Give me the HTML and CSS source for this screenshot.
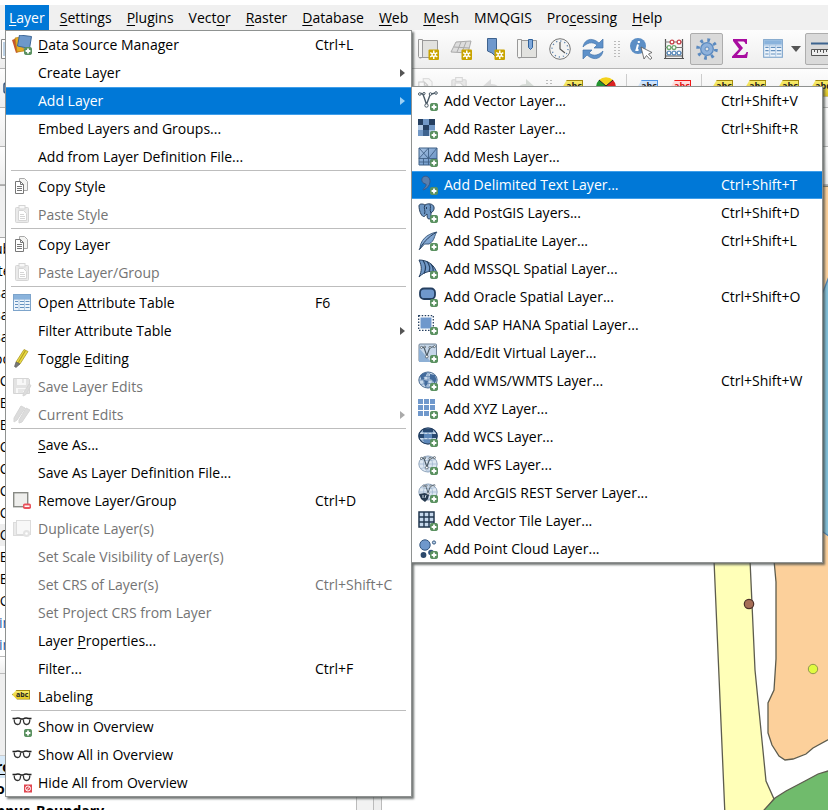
FILE: index.html
```html
<!DOCTYPE html>
<html lang="en">
<head>
<meta charset="utf-8">
<title>QGIS</title>
<meta name="viewport" content="width=device-width">
<link rel="stylesheet" href="styles.css">
</head>
<body>
<svg class="defs" aria-hidden="true">
  <defs>
    <linearGradient id="g-blue" x1="0" y1="0" x2="1" y2="1"><stop offset="0" stop-color="#a9c4e4"/><stop offset="1" stop-color="#5d8bc0"/></linearGradient>
  </defs>
  <symbol id="plus" viewBox="0 0 20 20"><rect x="12.500" y="12.500" width="7" height="7" rx="1.200" fill="#5a9160" stroke="#5a9160"/><path d="M16 13.600v4.800M13.600 16h4.800" stroke="#fff" stroke-width="1.800"/></symbol>
  <symbol id="star" viewBox="0 0 20 20"><rect x="10" y="10" width="10" height="10" rx="1" fill="#c9a400"/><path d="M15 11v8M11.600 13l6.800 4M18.400 13l-6.800 4" stroke="#fff" stroke-width="1.400"/><circle cx="15" cy="15" r="2.200" fill="#fff"/><circle cx="15" cy="15" r="1" fill="#c9a400"/></symbol>
  <symbol id="source" viewBox="0 0 20 20"><path d="M0 5l5-2 4 13-5 2z" fill="#c9552b"/><path d="M3 3l6-1 3 14-7 1z" fill="#e5ac25" stroke="#b57c13" stroke-width=".7"/><path d="M7.500 0l12 1.500-2 12L5.500 11z" fill="#6d98cb" stroke="#3f6898"/><use href="#plus"/></symbol>
  <symbol id="copy" viewBox="0 0 20 20"><path d="M7.500 1.500h5l3 3v9h-8z" fill="#f4f4f2" stroke="#aaa"/><path d="M3.500 4.500h5l3 3v9h-8z" fill="#fff" stroke="#777"/><path d="M8.500 4.500v3h3M5 9.500h5M5 11.500h5M5 13.500h5" fill="none" stroke="#777"/></symbol>
  <symbol id="paste" viewBox="0 0 20 20"><rect x="3.500" y="2.500" width="13" height="15" rx="1" fill="#ccc" stroke="#999"/><rect x="7" y=".5" width="6" height="3.500" fill="#eee" stroke="#999"/><path d="M6.500 5.500h5l3 3v7h-8z" fill="#fff" stroke="#999"/><path d="M8 9.500h4M8 11.500h5M8 13.500h5" stroke="#999"/></symbol>
  <symbol id="table" viewBox="0 0 20 20"><rect x="1.500" y="1.500" width="17" height="16" fill="#edf4fb" stroke="#7da4cb"/><path d="M2 2h16v4H2z" fill="#8ab3dc"/><path d="M2 6.500h16M7 6v11M12.500 6v11" stroke="#9fbfe0" stroke-width=".8"/><path d="M3 8.500h3M8 8.500h4M13.500 8.500h4M3 11.500h3M8 11.500h4M13.500 11.500h4M3 14.500h3M8 14.500h4M13.500 14.500h4" stroke="#6490be"/></symbol>
  <symbol id="pencil" viewBox="0 0 20 20"><path d="M12 .5l4 2L8 15l-4-2z" fill="#eadc45" stroke="#a18b16" stroke-width=".7"/><path d="M13.500 1.500L6 14" stroke="#b59d20" stroke-width="1.200"/><path d="M4 13l4 2-4 3.500-1.500-1z" fill="#777" stroke="#555" stroke-width=".6"/></symbol>
  <symbol id="save" viewBox="0 0 20 20"><path d="M1.500 1.500h15l1 1v14h-16z" fill="#bbb" stroke="#999"/><path d="M5 2h9v6H5zM4 11h11v5H4z" fill="#eee"/><path d="M11 2v4M6 13h7M6 15h5" stroke="#999"/><path d="M17 7l2 1.500-5 9-3 1.500.5-3z" fill="#aaa" stroke="#999"/></symbol>
  <symbol id="pencils" viewBox="0 0 20 20"><path d="M9 1l4 2L5 15l-3 2v-4zM14 3l4 2-8 12-3 1v-3z" fill="#aaa" stroke="#999"/></symbol>
  <symbol id="remove" viewBox="0 0 20 20"><rect x="1.700" y="1.700" width="14" height="14" fill="#eeeeec" stroke="#888a85" stroke-width="1.400"/><rect x="11" y="12.500" width="8" height="5.500" rx="1.800" fill="#e8505a"/><path d="M12.500 15.200h5" stroke="#fff" stroke-width="1.500"/></symbol>
  <symbol id="dup" viewBox="0 0 20 20"><rect x="1.500" y="3.500" width="14" height="13" fill="#ccc" stroke="#aaa"/><rect x="4.500" y="1.500" width="14" height="14" fill="#eee" stroke="#aaa"/><circle cx="14.500" cy="14.500" r="3.500" fill="#bbb"/><circle cx="14.500" cy="14.500" r="1.300" fill="#fff"/></symbol>
  <symbol id="glasses" viewBox="0 0 20 10"><path d="M.5 1.500h3c2-1 4-.5 5.500.5h2c1.500-1 3.500-1.500 5.500-.5h3" fill="none" stroke="#222" stroke-width="1.400"/><path d="M2.200 2.500c0 3 1 5 3.400 5s3-2.500 3-5M11.400 2.500c0 3 .8 5 3.200 5s3.200-2 3.200-5" fill="none" stroke="#333" stroke-width="1.300"/></symbol>
  <symbol id="show" viewBox="0 0 20 20"><use href="#glasses" width="20" height="10"/><use href="#plus"/></symbol>
  <symbol id="showall" viewBox="0 0 20 20"><use href="#glasses" y="5" width="20" height="10"/></symbol>
  <symbol id="hide" viewBox="0 0 20 20"><use href="#glasses" width="20" height="10"/><rect x="12" y="11.500" width="8" height="8" fill="#e0454f"/><circle cx="16" cy="15.500" r="2.500" fill="none" stroke="#fff"/><path d="M14.500 17l3-3" stroke="#fff"/></symbol>
  <symbol id="vector" viewBox="0 0 20 20"><path d="M2 3c2.500-1.500 3.500 1 4 3l2.500 7.500L12 4c1.500-2 3.500-1 6-2" fill="none" stroke="#4b5a66" stroke-width="1.400"/><g fill="#fff" stroke="#4b5a66"><circle cx="1.800" cy="3" r="1.300"/><circle cx="8.500" cy="14.500" r="1.700"/><circle cx="12.500" cy="3" r="1.300"/><circle cx="18" cy="2" r="1.300"/><circle cx="6" cy="2.500" r="1.100"/></g></symbol>
  <symbol id="v-add" viewBox="0 0 20 20"><use href="#vector"/><use href="#plus"/></symbol>
  <symbol id="raster" viewBox="0 0 20 20"><path d="M0 0h17v17H0z" fill="#7298c6"/><path d="M0 0h5v6H0zM11 0h6v6h-6zM5 6h6v5H5z" fill="#253f60"/><path d="M0 6h5v5H0zM11 11h6v6h-6z" fill="#b0c8e4"/><path d="M5 11h6v6H5z" fill="#3e638f"/><use href="#plus"/></symbol>
  <symbol id="mesh" viewBox="0 0 20 20"><path d="M1 1h18v17H1z" fill="url(#g-blue)" stroke="#3f6086"/><path d="M1 11.500h18M10.500 1v17M1 1l9.500 10.500M10.500 1L1 11.500M19 1l-8.500 10.500M5.500 11.500V18M1 15h12M15 11.500V18" stroke="#3f6086" stroke-width=".9"/><use href="#plus"/></symbol>
  <symbol id="comma" viewBox="0 0 20 20"><path d="M5 2c3-2 7.500 0 7 5-.5 4-2.500 6-6.500 8-.8-.5.500-1.500 2-3.500 1-1.500.8-2.500-.5-2.800C3.500 8 3 4 5 2z" fill="#5b7fac" stroke="#37598a"/><use href="#plus"/></symbol>
  <symbol id="elephant" viewBox="0 0 20 20"><path d="M1 3c0-3 5-2 6-1 3-2 8-1.500 9 2 .7 3-1.500 5-3 6 0 4 0 6-2 6s-2-3-2-5c-2 1-2 3-3.500 2.500C3 13 1 7 1 3z" fill="#6e97c4" stroke="#273f5d"/><path d="M7 2C5 5 8 8 6.500 11M12 1.500c1.500 3-1 5 1 8.500M8.500 4v2" fill="none" stroke="#273f5d"/><use href="#plus"/></symbol>
  <symbol id="feather" viewBox="0 0 20 20"><path d="M2 18C2 10 8 3 19 1c-3 3-2 9-8 12H6.500z" fill="url(#g-blue)" stroke="#3e5d80"/><path d="M1 19C5 12 10 6 18 1.500" fill="none" stroke="#263f5e"/><use href="#plus"/></symbol>
  <symbol id="sail" viewBox="0 0 20 20"><path d="M1 1c8 0 15 4 18 13-5-3-12-2-18 4 3-6 3-11 0-17z" fill="#7299c7" stroke="#253f60"/><path d="M5 1.500c3 4 3 9 1 13M9 2.500c3 4 3.500 7 2 10M13 5c2 3 2.500 5 2 7" fill="none" stroke="#253f60" stroke-width="1.200"/><use href="#plus"/></symbol>
  <symbol id="oracle" viewBox="0 0 20 20"><rect x="2" y="1.500" width="15" height="10.500" rx="4" fill="#6f98cc" stroke="#253f60" stroke-width="1.800"/><use href="#plus"/></symbol>
  <symbol id="hana" viewBox="0 0 20 20"><path d="M2.500 2.500h11v11h-11z" fill="#6f98cc"/><path d="M.7.700h14.600v14.600H.7z" fill="none" stroke="#253f60" stroke-width="1.300" stroke-dasharray="1.500 1.500"/><use href="#plus"/></symbol>
  <symbol id="virtual" viewBox="0 0 20 20"><rect x="1" y="1" width="17.500" height="17.500" rx="1" fill="#c5d6e8" stroke="#708396"/><path d="M1 19V5l12 14z" fill="#8eb0d5"/><use href="#vector" x="2" y="2" width="16" height="16"/><use href="#plus"/></symbol>
  <symbol id="globe" viewBox="0 0 20 20"><ellipse cx="10" cy="9" rx="9.200" ry="8" fill="#c8d9eb" stroke="#4d6d91"/><path d="M1 9h18M3 4.500c4 1.500 10 1.500 14 0M3 13.500c4-1.500 10-1.500 14 0M10 1v16M10 1C4 5 4 13 10 17M10 1c6 4 6 12 0 16" fill="none" stroke="#6489b1" stroke-width=".8"/></symbol>
  <symbol id="wms" viewBox="0 0 20 20"><use href="#globe"/><path d="M2 5c2-3 5-3.500 7-3L8 5 5.500 6l1 2-3 1zM6 9l4 1-1 4-2 2zM12 3l5 1 1.500 5-2 4-2-4-3-1z" fill="#426b9c"/><use href="#plus"/></symbol>
  <symbol id="xyz" viewBox="0 0 20 20"><path d="M0 0h5v5H0zM6 0h5v5H6zM12 0h5v5h-5zM0 6h5v5H0zM6 6h5v5H6zM12 6h5v5h-5zM0 12h5v5H0zM6 12h5v5H6z" fill="#6f98cc"/><use href="#plus"/></symbol>
  <symbol id="wcs" viewBox="0 0 20 20"><use href="#globe"/><path d="M5 2h10v3H5zM1 7h5v4H1zM14 7h5v4h-5z" fill="#294a72"/><path d="M6 7h8v4H6zM5 13h9v3H6z" fill="#5d88ba"/><ellipse cx="10" cy="9" rx="9.200" ry="8" fill="none" stroke="#253f60" stroke-width="1.200"/><use href="#plus"/></symbol>
  <symbol id="wfs" viewBox="0 0 20 20"><g opacity=".6"><use href="#globe"/></g><use href="#vector" x="2" y="1" width="16" height="16"/><use href="#plus"/></symbol>
  <symbol id="arc" viewBox="0 0 20 20"><g opacity=".6"><use href="#globe"/></g><path d="M1 11l6-1 4 2-1 4-3 3-4-3z" fill="#273b50"/><path d="M5 12v3M8 12l-1 3" stroke="#cfdbe7"/><use href="#vector" x="4" y="1" width="14" height="13"/><use href="#plus"/></symbol>
  <symbol id="vtile" viewBox="0 0 20 20"><path d="M1 1h15v15H1z" fill="#c6d8ec" stroke="#22374f" stroke-width="1.500"/><path d="M6 1v15M11 1v15M1 6h15M1 11h15" stroke="#22374f" stroke-width="1.400"/><use href="#plus"/></symbol>
  <symbol id="cloud" viewBox="0 0 20 20"><circle cx="7" cy="6" r="5.200" fill="#6f98cc" stroke="#34567f"/><circle cx="16" cy="3.500" r="1.600" fill="#b9d1ea" stroke="#34567f"/><circle cx="5.500" cy="16" r="2.900" fill="#2b486b"/><circle cx="13" cy="13.500" r="2.800" fill="#34567f"/><use href="#plus"/></symbol>
  <symbol id="scroll" viewBox="0 0 22 22"><path d="M5.500 2.500h15v17h-15z" fill="#e2e2df" stroke="#999"/><path d="M1.500 1.500h4v17c-1 2-3.500 2-4 0z" fill="#f5f5f3" stroke="#999"/><path d="M2 19.500h16" stroke="#999"/></symbol>
</svg>

<div class="window">
  <nav class="menubar" aria-label="Main menu">
    <div class="entry">
      <button class="top open"><u>L</u>ayer</button>
      <ul class="menu menu-main">
        <li><button class="item"><svg class="ico"><use href="#source"/></svg><span><u>D</u>ata Source Manager</span><kbd>Ctrl+L</kbd></button></li>
        <li><button class="item sub"><i></i><span>Create Layer</span></button></li>
        <li class="parent"><button class="item sub on"><i></i><span>Add Layer</span></button>
          <ul class="menu menu-sub">
            <li><button class="item"><svg class="ico"><use href="#v-add"/></svg><span>Add Vector Layer...</span><kbd>Ctrl+Shift+V</kbd></button></li>
            <li><button class="item"><svg class="ico"><use href="#raster"/></svg><span>Add Raster Layer...</span><kbd>Ctrl+Shift+R</kbd></button></li>
            <li><button class="item"><svg class="ico"><use href="#mesh"/></svg><span>Add Mesh Layer...</span></button></li>
            <li><button class="item on"><svg class="ico"><use href="#comma"/></svg><span>Add Delimited Text Layer...</span><kbd>Ctrl+Shift+T</kbd></button></li>
            <li><button class="item"><svg class="ico"><use href="#elephant"/></svg><span>Add PostGIS Layers...</span><kbd>Ctrl+Shift+D</kbd></button></li>
            <li><button class="item"><svg class="ico"><use href="#feather"/></svg><span>Add SpatiaLite Layer...</span><kbd>Ctrl+Shift+L</kbd></button></li>
            <li><button class="item"><svg class="ico"><use href="#sail"/></svg><span>Add MSSQL Spatial Layer...</span></button></li>
            <li><button class="item"><svg class="ico"><use href="#oracle"/></svg><span>Add Oracle Spatial Layer...</span><kbd>Ctrl+Shift+O</kbd></button></li>
            <li><button class="item"><svg class="ico"><use href="#hana"/></svg><span>Add SAP HANA Spatial Layer...</span></button></li>
            <li><button class="item"><svg class="ico"><use href="#virtual"/></svg><span>Add/Edit Virtual Layer...</span></button></li>
            <li><button class="item"><svg class="ico"><use href="#wms"/></svg><span>Add WMS/WMTS Layer...</span><kbd>Ctrl+Shift+W</kbd></button></li>
            <li><button class="item"><svg class="ico"><use href="#xyz"/></svg><span>Add XYZ Layer...</span></button></li>
            <li><button class="item"><svg class="ico"><use href="#wcs"/></svg><span>Add WCS Layer...</span></button></li>
            <li><button class="item"><svg class="ico"><use href="#wfs"/></svg><span>Add WFS Layer...</span></button></li>
            <li><button class="item"><svg class="ico"><use href="#arc"/></svg><span>Add Ar<u>c</u>GIS REST Server Layer...</span></button></li>
            <li><button class="item"><svg class="ico"><use href="#vtile"/></svg><span>Add Vector Tile Layer...</span></button></li>
            <li><button class="item"><svg class="ico"><use href="#cloud"/></svg><span>Add Point Cloud Layer...</span></button></li>
          </ul>
        </li>
        <li><button class="item"><i></i><span>Embed Layers and Groups...</span></button></li>
        <li><button class="item"><i></i><span>Add from Layer Definition File...</span></button></li>
        <li class="sep" role="separator"></li>
        <li><button class="item"><svg class="ico"><use href="#copy"/></svg><span>Copy Style</span></button></li>
        <li><button class="item" disabled><svg class="ico"><use href="#paste"/></svg><span>Paste Style</span></button></li>
        <li class="sep" role="separator"></li>
        <li><button class="item"><svg class="ico"><use href="#copy"/></svg><span>Copy Layer</span></button></li>
        <li><button class="item" disabled><svg class="ico"><use href="#paste"/></svg><span>Paste Layer/Group</span></button></li>
        <li class="sep" role="separator"></li>
        <li><button class="item"><svg class="ico"><use href="#table"/></svg><span>Open <u>A</u>ttribute Table</span><kbd>F6</kbd></button></li>
        <li><button class="item sub"><i></i><span>Filter Attribute Table</span></button></li>
        <li><button class="item"><svg class="ico"><use href="#pencil"/></svg><span>Toggle <u>E</u>diting</span></button></li>
        <li><button class="item" disabled><svg class="ico"><use href="#save"/></svg><span>Save Layer Edits</span></button></li>
        <li><button class="item sub" disabled><svg class="ico"><use href="#pencils"/></svg><span>Current Edits</span></button></li>
        <li class="sep" role="separator"></li>
        <li><button class="item"><i></i><span><u>S</u>ave As...</span></button></li>
        <li><button class="item"><i></i><span>Save As Layer Definition File...</span></button></li>
        <li><button class="item"><svg class="ico"><use href="#remove"/></svg><span>Remove Layer/Group</span><kbd>Ctrl+D</kbd></button></li>
        <li><button class="item" disabled><svg class="ico"><use href="#dup"/></svg><span>Duplicate Layer(s)</span></button></li>
        <li><button class="item" disabled><i></i><span>Set Scale Visibility of Layer(s)</span></button></li>
        <li><button class="item" disabled><i></i><span>Set CRS of Layer(s)</span><kbd>Ctrl+Shift+C</kbd></button></li>
        <li><button class="item" disabled><i></i><span>Set Project CRS from Layer</span></button></li>
        <li><button class="item"><i></i><span>Layer <u>P</u>roperties...</span></button></li>
        <li><button class="item"><i></i><span>Filter...</span><kbd>Ctrl+F</kbd></button></li>
        <li><button class="item"><span class="tag small">abc</span><span>Labeling</span></button></li>
        <li class="sep" role="separator"></li>
        <li><button class="item"><svg class="ico"><use href="#show"/></svg><span>Show in Overview</span></button></li>
        <li><button class="item"><svg class="ico"><use href="#showall"/></svg><span>Show All in Overview</span></button></li>
        <li><button class="item"><svg class="ico"><use href="#hide"/></svg><span>Hide All from Overview</span></button></li>
      </ul>
    </div>
    <button class="top"><u>S</u>ettings</button>
    <button class="top"><u>P</u>lugins</button>
    <button class="top">Vect<u>o</u>r</button>
    <button class="top"><u>R</u>aster</button>
    <button class="top"><u>D</u>atabase</button>
    <button class="top"><u>W</u>eb</button>
    <button class="top"><u>M</u>esh</button>
    <button class="top">MMQGIS</button>
    <button class="top">Pro<u>c</u>essing</button>
    <button class="top"><u>H</u>elp</button>
  </nav>

  <div class="toolbar" role="toolbar" aria-label="Project">
    <button class="tool lead" aria-label="New"><svg viewBox="0 0 22 22"><path d="M1.500 1.500h19v19h-19z" fill="#fff" stroke="#888"/><path d="M4 4v14" stroke="#7da4cb"/></svg></button>
    <button class="tool" aria-label="New layout"><svg viewBox="0 0 22 22"><use href="#scroll"/><use href="#star" x="1" y="1" width="21" height="21"/></svg></button>
    <button class="tool" aria-label="New mesh"><svg viewBox="0 0 22 22"><path d="M6 4l15-1-3 12L1 14z" fill="#ddd" stroke="#aaa"/><path d="M4 9l15 1M11 4L7 14M16 4l-4 10" stroke="#aaa"/><use href="#star" x="1" y="1" width="21" height="21"/></svg></button>
    <button class="tool" aria-label="New bookmark"><svg viewBox="0 0 22 22"><path d="M4.500.5h9v19L9 15l-4.500-2z" fill="#6f98cc" stroke="#3e628e"/><use href="#star" x="1" y="1" width="21" height="21"/></svg></button>
    <button class="tool" aria-label="Show bookmarks"><svg viewBox="0 0 22 22"><use href="#scroll"/><path d="M12.500 1.500h4v8l-2 2-2-2z" fill="#7fa8da" stroke="#31629b"/></svg></button>
    <button class="tool" aria-label="Temporal controller"><svg viewBox="0 0 22 22"><circle cx="11" cy="11" r="10.300" fill="#f4f4f3" stroke="#777"/><circle cx="11" cy="11" r="8" fill="none" stroke="#5c83ae" stroke-width="1.300" stroke-dasharray="1.200 2.990"/><path d="M11 4v7l5 4" fill="none" stroke="#555" stroke-width="1.200"/></svg></button>
    <button class="tool" aria-label="Refresh"><svg viewBox="0 0 22 22"><path d="M1 9c1-6 6-9 11-7 2 .5 3.500 2 5 3l4-4v9h-9l3-3C10 3 5 5 1 9zM21 13c-1 6-6 9-11 7-2-.5-3.500-2-5-3l-4 4v-9h9l-3 3c5 4 10 2 14-2z" fill="#5e91ca" stroke="#4474aa" stroke-width=".7"/></svg></button>
    <span class="grip"></span>
    <button class="tool" aria-label="Identify"><svg viewBox="0 0 22 22"><circle cx="8" cy="8" r="8" fill="#5c8ec5"/><path d="M8.800 3v2M8 6.500L6.500 12h2" stroke="#fff" stroke-width="2" fill="none"/><path d="M11 9l3 12 2.500-3.500 3.500 4 2-1.500-3.500-4 3.500-1.500z" fill="#fff" stroke="#555" stroke-width=".8"/></svg></button>
    <button class="tool" aria-label="Field calculator"><svg viewBox="0 0 22 22"><path d="M2.500 1v19M19.500 1v19M1 20.500h20M2 18h18" stroke="#555" stroke-width="1.200"/><path d="M2 4h18M2 9.500h18M2 15h18" stroke="#777"/><g fill="#fff" stroke-width="1.300"><g stroke="#c8434b"><circle cx="9" cy="4" r="1.900"/><circle cx="16" cy="4" r="1.900"/></g><g stroke="#6ca86f"><circle cx="6" cy="9.500" r="1.900"/><circle cx="11" cy="9.500" r="1.900"/></g><g stroke="#5e8dbd"><circle cx="6" cy="15" r="1.900"/><circle cx="11" cy="15" r="1.900"/><circle cx="16" cy="15" r="1.900"/></g></g></svg></button>
    <button class="tool pressed" aria-label="Toolbox"><svg viewBox="0 0 22 22"><circle cx="11" cy="11" r="9" fill="none" stroke="#5b8ac0" stroke-width="3.600" stroke-dasharray="2.700 4.370"/><circle cx="11" cy="11" r="6.300" fill="#8eb1db" stroke="#5b8ac0" stroke-width="1.300"/><circle cx="11" cy="11" r="2" fill="#e3e3e3" stroke="#5b8ac0"/></svg></button>
    <button class="tool" aria-label="Statistics"><svg viewBox="0 0 22 22"><path d="M4 1h14v5h-1.500c-.5-2-1.500-2.500-3-2.500H8.500L14 10l-6 7h6c2 0 3-1 3.500-3H19l-1 6H3v-1.500L10 11 4 3z" fill="#a80ca0"/></svg></button>
    <button class="tool" aria-label="Attribute table"><svg viewBox="0 0 20 20"><use href="#table"/></svg></button>
    <span class="drop"></span>
    <button class="tool pressed" aria-label="Measure"><svg viewBox="0 0 22 22"><path d="M0 5.500h22" stroke="#3d648f" stroke-width="2"/><path d="M.5 11.500h21v6H.5z" fill="#eee" stroke="#555"/><path d="M3.500 11v3M6.500 11v4M9.500 11v3M12.500 11v4M15.500 11v3M18.500 11v4" stroke="#555"/></svg></button>
  </div>

  <div class="toolbar second" role="toolbar" aria-label="Labels">
    <button class="tool lead" aria-label="Digitize"><svg viewBox="0 0 22 22"><rect x="4" y="6" width="9" height="10" rx="2" fill="#dce7f3" stroke="#34567f" stroke-width="1.500"/></svg></button>
    <button class="tool faint" aria-label="Copy features"><svg viewBox="0 0 20 20"><use href="#copy"/></svg></button>
    <button class="tool faint" aria-label="Paste features"><svg viewBox="0 0 20 20"><use href="#paste"/></svg></button>
    <button class="tool faint" aria-label="Undo"><svg viewBox="0 0 22 22"><path d="M1 10l9-8v5c6 0 9 3 10 9-3-4-6-4-10-4v5z" fill="#aaa"/></svg></button>
    <button class="tool faint" aria-label="Redo"><svg viewBox="0 0 22 22"><path d="M21 10l-9-8v5c-6 0-9 3-10 9 3-4 6-4 10-4v5z" fill="#9aa89a"/></svg></button>
    <span class="grip"></span>
    <button class="tool"><span class="tag">abc</span></button>
    <button class="tool" aria-label="Diagrams"><svg viewBox="0 0 22 22"><path d="M11 9L4 3a10 10 0 0 1 14 0z" fill="#f4d21c"/><path d="M11 9l7-6a10 10 0 0 1-7 17z" fill="#d92020"/><path d="M11 9v11A10 10 0 0 1 4 3z" fill="#239530"/><path d="M11 9L4 3M11 9l7-6" stroke="#222"/></svg></button>
    <span class="rule"></span>
    <button class="tool"><span class="tag blue">abc</span></button>
    <button class="tool"><span class="tag red">abc</span></button>
    <span class="rule"></span>
    <button class="tool"><span class="tag">abc</span></button>
    <button class="tool"><span class="tag">abc</span></button>
    <button class="tool"><span class="tag">abc</span></button>
    <button class="tool"><span class="tag">abc</span></button>
  </div>
  <div class="toolbar"></div>
  <div class="toolbar last"></div>

  <main class="work">
    <aside class="dock">
      <div class="panel-head"></div>
      <ul class="tree">
        <li>ub</li><li>&nbsp;te</li><li>sa</li><li>sa</li><li>sa</li><li>oo</li>
        <li>rC</li><li>rB</li><li>rB</li><li>rC</li><li>rC</li><li>rC</li><li>rC</li><li class="hover">rC</li><li>rE</li><li>rE</li><li>rG</li>
        <li class="link">tin</li><li class="link">tin</li>
      </ul>
      <div class="layer-head"></div>
      <div class="layer-tools"></div>
      <ul class="layers"><li class="chosen"><u>ro</u></li><li>oe</li><li>npus_Boundary</li></ul>
    </aside>
    <svg class="map" viewBox="382 186 446 624" preserveAspectRatio="xMinYMin slice" role="img" aria-label="Map canvas">
      <g stroke="#5d5c4e" stroke-width="1.300">
        <path d="M706 186L714 560l11 256h36l13-17-8-18-11-111-5-110-2-374z" fill="#ffffb8"/>
        <path d="M764 186l10 374 2 22v77l-2 31-6 13v30l4 12 7 11 6 4 8-1 13-5 7-6 18-10V186z" fill="#fcd09b"/>
        <path d="M755 820l20-22 11-7 19-10 13-7 10-3h8v49z" fill="#70bb6c"/>
        <path d="M816 310l14-36v263l-14-10z" fill="#83bfd8" stroke="#4f84b5"/>
      </g>
      <circle cx="749" cy="604" r="4.700" fill="#a66e57" stroke="#4d302a" stroke-width="1.200"/>
      <circle cx="813" cy="669" r="4.700" fill="#e0fb40" stroke="#909849"/>
    </svg>
  </main>
</div>
</body>
</html>
```
FILE: styles.css
```css
* { box-sizing: border-box; }
body {
  margin: 0;
  background: #fff;
  color: #000;
  font: 14px/20px "Open Sans", "Noto Sans", sans-serif;
  overflow: hidden;
}
button { font: inherit; color: inherit; background: none; border: 0; padding: 0; margin: 0; text-align: left; }
ul { list-style: none; margin: 0; padding: 0; }
u { text-decoration: underline; text-underline-offset: 2px; }
.defs { position: absolute; width: 0; height: 0; }

.window { display: flex; flex-direction: column; height: 100vh; padding-top: 5px; }

.menubar { display: flex; gap: 7px; height: 25px; padding-left: 5px; background: #f0f0f0; flex: none; }
.entry { position: relative; }
.top { height: 25px; padding: 0 4px; white-space: nowrap; }
.top.open { background: #0078d7; color: #fff; }

.menu {
  position: absolute;
  z-index: 2;
  background: #fff;
  border: 1px solid #8f9291;
  box-shadow: 2px 2px 2px rgba(70, 75, 73, .75);
  white-space: nowrap;
}
.menu-main { top: 25px; left: 0; }
.menu-sub { top: -1px; left: 100%; }
.menu > li:last-child { margin-bottom: -1px; }
.parent { position: relative; }
.item {
  display: grid;
  grid-template-columns: 32px 277px 96px;
  align-items: center;
  position: relative;
  width: 100%;
  height: 28px;
}
.menu-sub .item { grid-template-columns: 32px 277px 101px; }
.item kbd { font: inherit; }
.item.on { background: #0078d7; color: #fff; box-shadow: inset 0 1px #3f9eea, inset 0 -1px #3f9eea; }
.item:disabled { color: #747474; }
.item:disabled .ico { opacity: .4; }
.ico { width: 20px; height: 20px; margin-left: 6px; }
.sub::after {
  content: "";
  justify-self: end;
  margin-right: 6px;
  border: 4px solid transparent;
  border-left: 5px solid #555;
  border-right: 0;
}
.sub.on::after { border-left-color: #9bd0f5; }
.sub:disabled::after { border-left-color: #aaa; }
.sep { height: 3px; margin: -1px 5px 0; border-top: 1px solid #bdbdbd; }

.toolbar {
  display: flex;
  align-items: center;
  flex: none;
  height: 39px;
  overflow: hidden;
  background: linear-gradient(#fdfdfd, #ededed);
  border-bottom: 1px solid #b5b5b5;
}
.toolbar.last { height: 38px; }
.tool { display: flex; align-items: center; justify-content: center; flex: none; width: 33px; height: 32px; }
.tool svg { width: 22px; height: 22px; }
.tool.lead { width: 411px; justify-content: flex-start; }
.second .lead { width: 409px; }
.tool.faint { opacity: .35; }
.pressed { background: #dadada; border: 1px solid #adadad; border-radius: 2px; }
.grip {
  flex: none;
  width: 7px;
  height: 18px;
  margin: 0 4px;
  background: radial-gradient(circle, #bbb 1px, transparent 1px) 0 0 / 4px 3px;
}
.drop { flex: none; margin: 0 4px 0 2px; border: 5px solid transparent; border-top: 6px solid #555; border-bottom: 0; }
.rule { flex: none; width: 1px; height: 28px; margin: 0 4px; background: #ccc; }
.tag {
  width: 21px;
  height: 17px;
  padding-left: 3px;
  background: linear-gradient(#f8ec6c, #dfc41e);
  clip-path: polygon(5px 0, 100% 0, 100% 100%, 5px 100%, 0 50%);
  border: 1px solid #a38a10;
  font: bold 9px/10px "Open Sans", sans-serif;
  color: #222;
}
.tag.blue { background: #cfe3fa; border-color: #4d94e8; }
.tag.red { background: #ffdcdc; border-color: #f01818; color: #e01010; }
.tag.small { width: 18px; height: 10px; margin: 0 0 5px 6px; padding-left: 3px; font-size: 7px; line-height: 7px; }

.work { display: flex; flex: 1; min-height: 0; border-top: 1px solid #aaa; }
.dock { width: 382px; flex: none; overflow: hidden; background: #fff; border-right: 1px solid #bbb; }
.panel-head { height: 52px; background: #f0f0f0; border-bottom: 1px solid #aaa; }
.tree li { height: 22px; line-height: 22px; text-indent: -6px; }
.tree .hover { background: #eee; }
.link { color: #1b5fa8; }
.layer-head { height: 18px; background: linear-gradient(#fff, #eee); border: solid #bbb; border-width: 1px 0; }
.layer-tools { height: 82px; background: #efefef; border-bottom: 1px solid #ccc; }
.layers {
  height: 100px;
  font-weight: bold;
  background: linear-gradient(90deg, transparent 356px, #bbb 356px, #bbb 357px, #f2f2f2 357px, #f2f2f2 373px, #bbb 373px, #bbb 374px, #eee 374px);
}
.layers li { height: 22px; line-height: 22px; text-indent: -4px; }
.layers .chosen { background: #d8eaf9; width: 356px; }
.map { flex: 1; min-width: 0; height: 100%; display: block; background: #fff; }
```
